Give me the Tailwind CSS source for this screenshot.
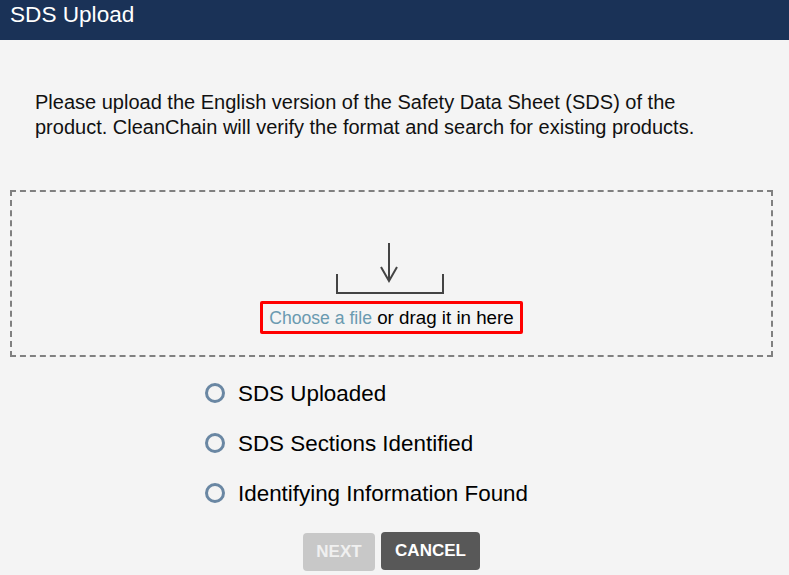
<!DOCTYPE html>
<html lang="en">
  <head>
    <meta charset="UTF-8" />
    <title>SDS Upload</title>
    <script src="https://cdn.jsdelivr.net/npm/@tailwindcss/browser@4"></script>
  </head>
  <body class="h-[575px] w-[789px] overflow-hidden bg-[#f4f4f4] font-['Liberation_Sans',sans-serif] text-black">
    <!-- Header -->
    <header class="h-10 bg-[#1a3257] pl-[10px] pt-[1px] text-[22.6px] leading-[28px] text-white">SDS Upload</header>

    <p class="ml-[35px] mt-[50px] w-[700px] text-[20px] leading-[25px] text-[#111]">
      Please upload the English version of the Safety Data Sheet (SDS) of the product. CleanChain will verify the format and search for existing products.
    </p>

    <!-- Drop zone -->
    <div class="mx-[10px] mt-[50px] flex h-[167px] w-[763px] flex-col items-center border-2 border-dashed border-[#808080] pt-[51px]">
      <svg class="mr-[3px]" width="108" height="52" viewBox="0 0 108 52" fill="none" stroke="#444" stroke-width="2">
        <path d="M1 31V50H107V31" />
        <path d="M53 0V38M45 24L53 38L61 24" />
      </svg>
      <div class="mt-[6px] rounded-[2px] border-[3px] border-[#ff0000] px-[6px] pt-[1px] text-[18.75px] leading-[26px]">
        <a class="text-[17.6px] text-[#6a9ab0]">Choose a file</a> or drag it in here
      </div>
    </div>

    <!-- Steps -->
    <ul class="ml-[205px] mt-[22px] flex flex-col gap-[20px] text-[22.4px] leading-[30px] text-black">
      <li class="flex items-center gap-[13px]"><span class="mb-[2px] size-[20px] rounded-full border-[3.5px] border-[#6a87a3]"></span>SDS Uploaded</li>
      <li class="flex items-center gap-[13px]"><span class="mb-[2px] size-[20px] rounded-full border-[3.5px] border-[#6a87a3]"></span>SDS Sections Identified</li>
      <li class="flex items-center gap-[13px]"><span class="mb-[2px] size-[20px] rounded-full border-[3.5px] border-[#6a87a3]"></span>Identifying Information Found</li>
    </ul>

    <!-- Buttons -->
    <div class="ml-[303px] mt-[23px] flex items-start gap-[6px] text-[17px] font-bold">
      <button class="mt-[1px] h-[38px] w-[72px] rounded-[4px] bg-[#c8c8c8] text-[#f0f0f0]">NEXT</button>
      <button class="h-[38px] w-[99px] rounded-[4px] bg-[#585858] text-white">CANCEL</button>
    </div>
  </body>
</html>
